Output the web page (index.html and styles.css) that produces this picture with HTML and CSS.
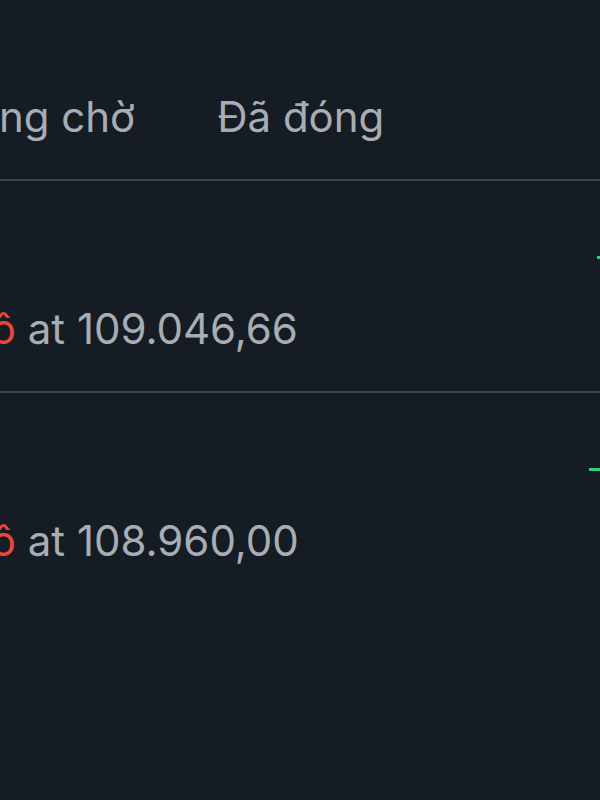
FILE: index.html
```html
<!DOCTYPE HTML>
<html>
	<head>
		<meta charset="utf-8">
		<title>Lệnh</title>
		<link rel="stylesheet" href="styles.css">
	</head>
	<body>
		<div class="tabs">
			<span class="tab">Đang chờ</span>
			<span class="tab">Đã đóng</span>
		</div>

		<div class="order">
			<div class="change"><span class="tick short"></span></div>
			<div class="main">
				<span class="side">Lô</span>
				<span class="price">at 109.046,66</span>
			</div>
		</div>

		<div class="order">
			<div class="change"><span class="tick long"></span></div>
			<div class="main">
				<span class="side">Lô</span>
				<span class="price">at 108.960,00</span>
			</div>
		</div>
	</body>
</html>
```
FILE: styles.css
```css
html,body
{
	margin:0;
	height:100%;
	overflow:hidden;
	background:#161c23;
	font-family:Inter, "Noto Sans", "Liberation Sans", sans-serif;
	color:#a7adb4;
}

.tabs
{
	display:flex;
	gap:82px;
	height:87px;
	padding-top:92px;
	margin-left:-55px;
	border-bottom:2px solid #3d444c;
	font-size:42px;
	line-height:50px;
	white-space:nowrap;
}

.order
{
	display:flex;
	flex-direction:column;
	height:210px;
}

.order + .order
{
	border-top:2px solid #3d444c;
}

.change
{
	display:flex;
	justify-content:flex-end;
	margin-top:75px;
	height:3px;
}

.tick
{
	display:block;
	height:3px;
	background:#2fd27a;
}

.tick.short
{
	width:3px;
}

.tick.long
{
	width:11px;
}

.main
{
	margin-top:45px;
	margin-left:-33px;
	font-size:42px;
	line-height:50px;
	white-space:nowrap;
}

.side
{
	color:#e8473d;
}
```
